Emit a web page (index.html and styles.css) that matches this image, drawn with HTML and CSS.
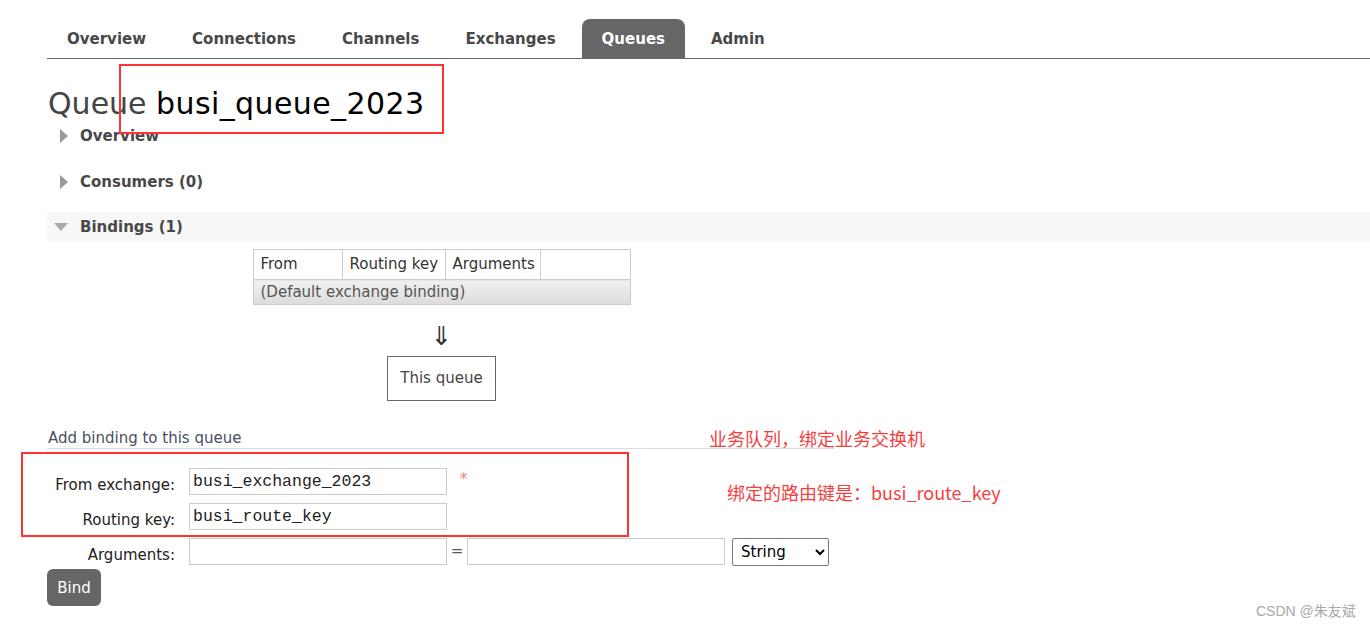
FILE: index.html
```html
<!DOCTYPE html>
<html>
<head>
<meta charset="utf-8">
<link rel="stylesheet" href="styles.css">
</head>
<body>
<div class="page">
  <ul class="nav">
    <li class="tab">Overview</li>
    <li class="tab">Connections</li>
    <li class="tab">Channels</li>
    <li class="tab">Exchanges</li>
    <li class="tab active">Queues</li>
    <li class="tab">Admin</li>
  </ul>

  <h1 class="title">Queue <span class="qname">busi_queue_2023</span></h1>

  <div class="section first"><span class="tri-right"></span>Overview</div>
  <div class="section"><span class="tri-right"></span>Consumers (0)</div>
  <div class="section open"><span class="tri-down"></span>Bindings (1)</div>

  <div class="bindwrap">
    <table class="bindings">
      <colgroup>
        <col class="c1"><col class="c2"><col class="c3"><col class="c4">
      </colgroup>
      <tr class="head">
        <td>From</td>
        <td>Routing key</td>
        <td>Arguments</td>
        <td></td>
      </tr>
      <tr class="row">
        <td colspan="4">(Default exchange binding)</td>
      </tr>
    </table>
    <div class="arrow">&#8659;</div>
    <div class="thisq">This queue</div>
  </div>

  <h3 class="addtitle">Add binding to this queue</h3>

  <div class="form">
    <label class="lbl">From exchange:</label>
    <div class="field"><input class="inp" type="text" value="busi_exchange_2023"><span class="req">*</span></div>
    <label class="lbl">Routing key:</label>
    <div class="field"><input class="inp" type="text" value="busi_route_key"></div>
    <label class="lbl">Arguments:</label>
    <div class="field"><input class="inp" type="text" value=""><span class="eq">=</span><input class="inp" type="text" value=""><select class="sel"><option>String</option></select></div>
  </div>
  <button class="bind">Bind</button>

  <div class="redbox box1"></div>
  <div class="redbox box2"></div>
  <div class="note note1">业务队列，绑定业务交换机</div>
  <div class="note note2">绑定的路由键是：busi_route_key</div>
  <div class="mark">CSDN @朱友斌</div>
</div>
</body>
</html>
```

FILE: styles.css
```css
* { box-sizing: border-box; }
html, body { margin: 0; padding: 0; background: #fff; }
body { font-family: "DejaVu Sans", Verdana, sans-serif; font-size: 15px; color: #333; }
.page { position: relative; width: 1370px; height: 626px; overflow: hidden; }

.nav {
  list-style: none; margin: 0 0 0 47px; padding: 19px 0 0 0;
  display: flex; border-bottom: 1px solid #666;
}
.tab {
  font-weight: bold; font-size: 15px; line-height: 19px; color: #484848;
  padding: 11px 20px 9px; margin-right: 6px; border-radius: 8px 8px 0 0;
}
.tab.active { background: #666; color: #fff; }

.title {
  margin: 29px 0 0 48px; font-weight: normal; font-size: 30px; line-height: 32px; color: #444;
}
.qname { color: #000; letter-spacing: 0.4px; }

.section {
  margin: 0 0 16px 47px; height: 30px; line-height: 30px;
  font-weight: bold; font-size: 15px; color: #484848;
  display: flex; align-items: center; padding-left: 13px;
}
.section.first { margin-top: 1px; }
.section.open { background: #f7f7f7; padding-left: 7px; margin-top: -1px; }
.tri-right {
  width: 0; height: 0; border-top: 7px solid transparent; border-bottom: 7px solid transparent;
  border-left: 8px solid #999; margin-right: 12px;
}
.tri-down {
  width: 0; height: 0; border-left: 7px solid transparent; border-right: 7px solid transparent;
  border-top: 8px solid #aaa; margin-right: 12px;
}

.bindwrap { margin: -9px 0 0 253px; width: 377px; display: flex; flex-direction: column; align-items: center; }
.bindings { border-collapse: collapse; width: 377px; font-size: 15px; table-layout: fixed; }
.bindings td { border: 1px solid #ccc; padding: 0 7px; color: #333; white-space: nowrap; overflow: hidden; line-height: 19px; }
.head td { height: 30px; }
.c1 { width: 89px; } .c2 { width: 103px; } .c3 { width: 95px; } .c4 { width: 90px; }
.row td { height: 25px; background: linear-gradient(#f0f0f0, #dcdcdc); color: #555; }
.arrow { margin-top: 11px; height: 40px; line-height: 40px; font-size: 26px; color: #333; }
.thisq { border: 1px solid #666; height: 45px; line-height: 43px; padding: 0 12px; color: #444; }

.addtitle {
  margin: 27px 0 0 47px; width: 788px; font-weight: normal; font-size: 15px; line-height: 20px;
  color: #4a5060; border-bottom: 1px solid #ddd; padding-left: 1px;
}

.form {
  margin: 19px 0 0 47px; display: grid; grid-template-columns: 128px auto;
  column-gap: 14px; row-gap: 8px; justify-content: start;
}
.lbl { text-align: right; color: #222; font-size: 15px; padding-top: 8px; line-height: 19px; }
.field { display: flex; align-items: flex-start; height: 27px; }
.inp {
  width: 258px; height: 27px; border: 1px solid #ccc; padding: 0 3px; margin: 0;
  font-family: "Liberation Mono", "Courier New", monospace; font-size: 16.5px; color: #222;
  outline: none;
}
.req { color: #f08080; margin-left: 13px; font-size: 15px; line-height: 22px; }
.eq { width: 20px; text-align: center; color: #555; line-height: 27px; }
.sel {
  margin-left: 7px; width: 97px; height: 28px; font-family: "DejaVu Sans", sans-serif; font-size: 15px;
  border: 1px solid #767676; border-radius: 2px; background: #fff; color: #000; padding: 0 4px;
}
.bind {
  margin: 4px 0 0 47px; width: 54px; height: 37px; border: none; border-radius: 6px;
  background: #666; color: #fff; font-family: "DejaVu Sans", sans-serif; font-size: 15px; padding: 0;
}

.redbox { position: absolute; border: 2px solid #f33; }
.box1 { left: 119px; top: 64px; width: 325px; height: 70px; }
.box2 { left: 21px; top: 452px; width: 608px; height: 85px; }
.note {
  position: absolute; color: #f43f3f; font-family: "Noto Sans CJK SC", "Noto Sans", sans-serif;
  font-size: 18px; line-height: 22px; white-space: nowrap;
}
.note1 { left: 709px; top: 427px; }
.note2 { left: 727px; top: 481px; }
.mark {
  position: absolute; left: 1256px; top: 600px; font-family: "Liberation Sans", "Noto Sans CJK SC", sans-serif;
  font-size: 14px; color: #a8a8a8; white-space: nowrap;
}
```
